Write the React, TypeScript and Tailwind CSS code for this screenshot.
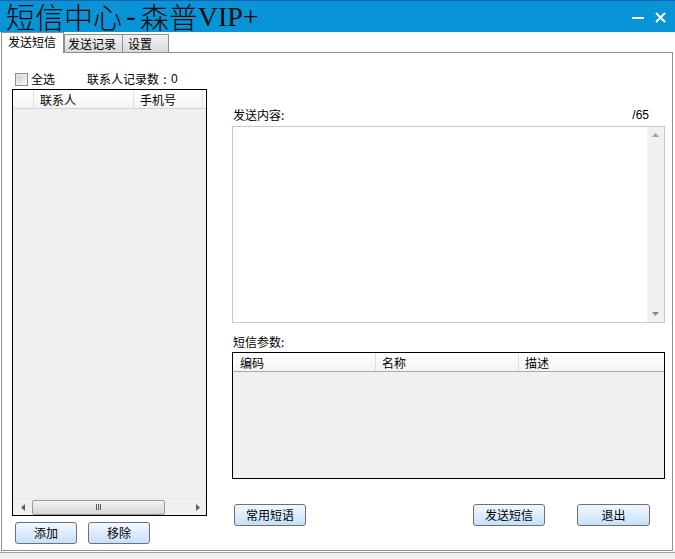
import { FC, ReactNode } from 'react';

const cjk = "font-['Noto_Sans_CJK_SC',sans-serif]";

const Btn: FC<{ w: string; children: ReactNode }> = ({ w, children }) => (
  <div
    className={`${w} h-[22px] flex items-center justify-center rounded-[3px] border border-[#707070] bg-gradient-to-b from-[#f2f8fe] to-[#c6e0fa] text-[12px] leading-[14px] text-black`}
  >
    {children}
  </div>
);

const HScroll: FC = () => (
  <div className="h-[17px] flex items-center bg-[#f0f0f0] border-t border-[#e8e8e8]">
    <div className="w-[19px] flex justify-center">
      <svg width="4" height="7" viewBox="0 0 4 7">
        <path d="M4 0 L0 3.5 L4 7 Z" fill="#606060" />
      </svg>
    </div>
    <div className="w-[133px] h-[15px] rounded-[2px] border border-[#9a9a9a] bg-gradient-to-b from-[#f4f4f4] to-[#d6d6d6] flex items-center justify-center">
      <div className="flex gap-[1px]">
        <div className="w-[1px] h-[6px] bg-[#555]" />
        <div className="w-[1px] h-[6px] bg-[#555]" />
        <div className="w-[1px] h-[6px] bg-[#555]" />
      </div>
    </div>
    <div className="flex-1" />
    <div className="w-[17px] flex justify-center">
      <svg width="4" height="7" viewBox="0 0 4 7">
        <path d="M0 0 L4 3.5 L0 7 Z" fill="#606060" />
      </svg>
    </div>
  </div>
);

const App: FC = () => {
  return (
    <div className={`w-[675px] h-[559px] bg-white flex flex-col overflow-hidden ${cjk} text-[12px] leading-[14px] text-black`}>
      {/* title bar */}
      <div className="h-[32px] bg-[#0894d6] border-t border-[#1f5fae] flex items-center justify-between">
        <div className="pl-[6px] flex items-center h-[31px] text-[29px] leading-[31px] text-[#0a0a0a] font-light">
          <span>短信中心</span>
          <span className="font-['Liberation_Serif',serif] px-[4px]">-</span>
          <span>森普</span>
          <span className="font-['Liberation_Serif',serif] text-[28px]">VIP+</span>
        </div>
        <div className="flex items-center gap-[11px] pr-[9px] pt-[2px]">
          <div className="w-[12px] h-[2px] bg-white" />
          <svg width="11" height="11" viewBox="0 0 11 11">
            <path d="M1 1 L10 10 M10 1 L1 10" stroke="white" strokeWidth="2" />
          </svg>
        </div>
      </div>

      {/* tabs */}
      <div className="h-[20px] flex items-end pl-[1px] relative z-10">
        <div className="w-[63px] h-[21px] bg-white border border-b-0 border-[#8e8f8f] pl-[6px] pt-[2px] relative top-[1px]">
          发送短信
        </div>
        <div className="w-[59px] h-[18px] border border-b-0 border-[#8e8f8f] bg-gradient-to-b from-[#f2f2f2] to-[#d9d9d9] pl-[3px] pt-[2px]">
          发送记录
        </div>
        <div className="w-[46px] h-[18px] border border-b-0 border-l-0 border-[#8e8f8f] bg-gradient-to-b from-[#f2f2f2] to-[#d9d9d9] pl-[5px] pt-[2px]">
          设置
        </div>
      </div>

      {/* panel */}
      <div className="ml-[1px] w-[672px] h-[499px] border border-[#8e8f8f] flex">
        {/* left */}
        <div className="w-[220px] pl-[10px] flex flex-col">
          <div className="mt-[18px] h-[16px] flex items-center">
            <div className="ml-[3px] w-[13px] h-[13px] border border-[#8f8f8f] bg-gradient-to-br from-[#dcdcdc] to-[#f8f8f8] p-[2px]">
              <div className="w-full h-full bg-gradient-to-br from-[#cfcfcf] to-[#f4f4f4]" />
            </div>
            <span className="ml-[3px]">全选</span>
            <span className="ml-[32px]">联系人记录数</span>
            <span className="w-[12px] text-center">:</span>
            <span className="font-['Liberation_Sans',sans-serif]">0</span>
          </div>
          <div className="mt-[2px] w-[195px] h-[427px] border border-black flex flex-col">
            <div className="h-[19px] flex bg-gradient-to-b from-white to-[#f4f4f4] border-b border-[#d5d5d5]">
              <div className="w-[21px] border-r border-[#e0e0e0]" />
              <div className="w-[100px] border-r border-[#e0e0e0] pl-[6px] pt-[3px]">联系人</div>
              <div className="w-[69px] border-r border-[#e0e0e0] pl-[6px] pt-[3px]">手机号</div>
            </div>
            <div className="flex-1 bg-[#f0f0f0]" />
            <HScroll />
          </div>
          <div className="mt-[6px] ml-[3px] flex gap-[11px]">
            <Btn w="w-[62px]">添加</Btn>
            <Btn w="w-[62px]">移除</Btn>
          </div>
        </div>

        {/* right */}
        <div className="w-[433px] ml-[10px] flex flex-col">
          <div className="mt-[55px] h-[14px] flex justify-between pl-[1px] pr-[16px]">
            <span>发送内容:</span>
            <span className="font-['Liberation_Sans',sans-serif]">/65</span>
          </div>
          <div className="mt-[4px] h-[197px] border border-[#c9c9c9] flex justify-end">
            <div className="w-[17px] bg-[#f0f0f0] flex flex-col items-center justify-between py-[6px]">
              <svg width="7" height="4" viewBox="0 0 7 4">
                <path d="M0 4 L3.5 0 L7 4 Z" fill="#a0a0a0" />
              </svg>
              <svg width="7" height="4" viewBox="0 0 7 4">
                <path d="M0 0 L3.5 4 L7 0 Z" fill="#8a8a8a" />
              </svg>
            </div>
          </div>
          <div className="mt-[12px] h-[14px] pl-[1px]">短信参数:</div>
          <div className="mt-[3px] h-[127px] border border-black flex flex-col">
            <div className="h-[19px] flex bg-gradient-to-b from-white to-[#f4f4f4] border-b border-[#a9a9a9]">
              <div className="w-[143px] border-r border-[#e0e0e0] pl-[7px] pt-[3px]">编码</div>
              <div className="w-[143px] border-r border-[#e0e0e0] pl-[6px] pt-[3px]">名称</div>
              <div className="flex-1 pl-[6px] pt-[3px]">描述</div>
            </div>
            <div className="flex-1 bg-[#f0f0f0]" />
          </div>
          <div className="mt-[25px] flex pl-[2px]">
            <Btn w="w-[72px]">常用短语</Btn>
            <div className="w-[167px]" />
            <Btn w="w-[72px]">发送短信</Btn>
            <div className="w-[32px]" />
            <Btn w="w-[73px]">退出</Btn>
          </div>
        </div>
      </div>

      {/* bottom strip */}
      <div className="h-[1px] bg-white" />
      <div className="h-[1px] bg-[#a0a0a0]" />
      <div className="flex-1 bg-[#f0f0f0]" />
    </div>
  );
};

export default App;
